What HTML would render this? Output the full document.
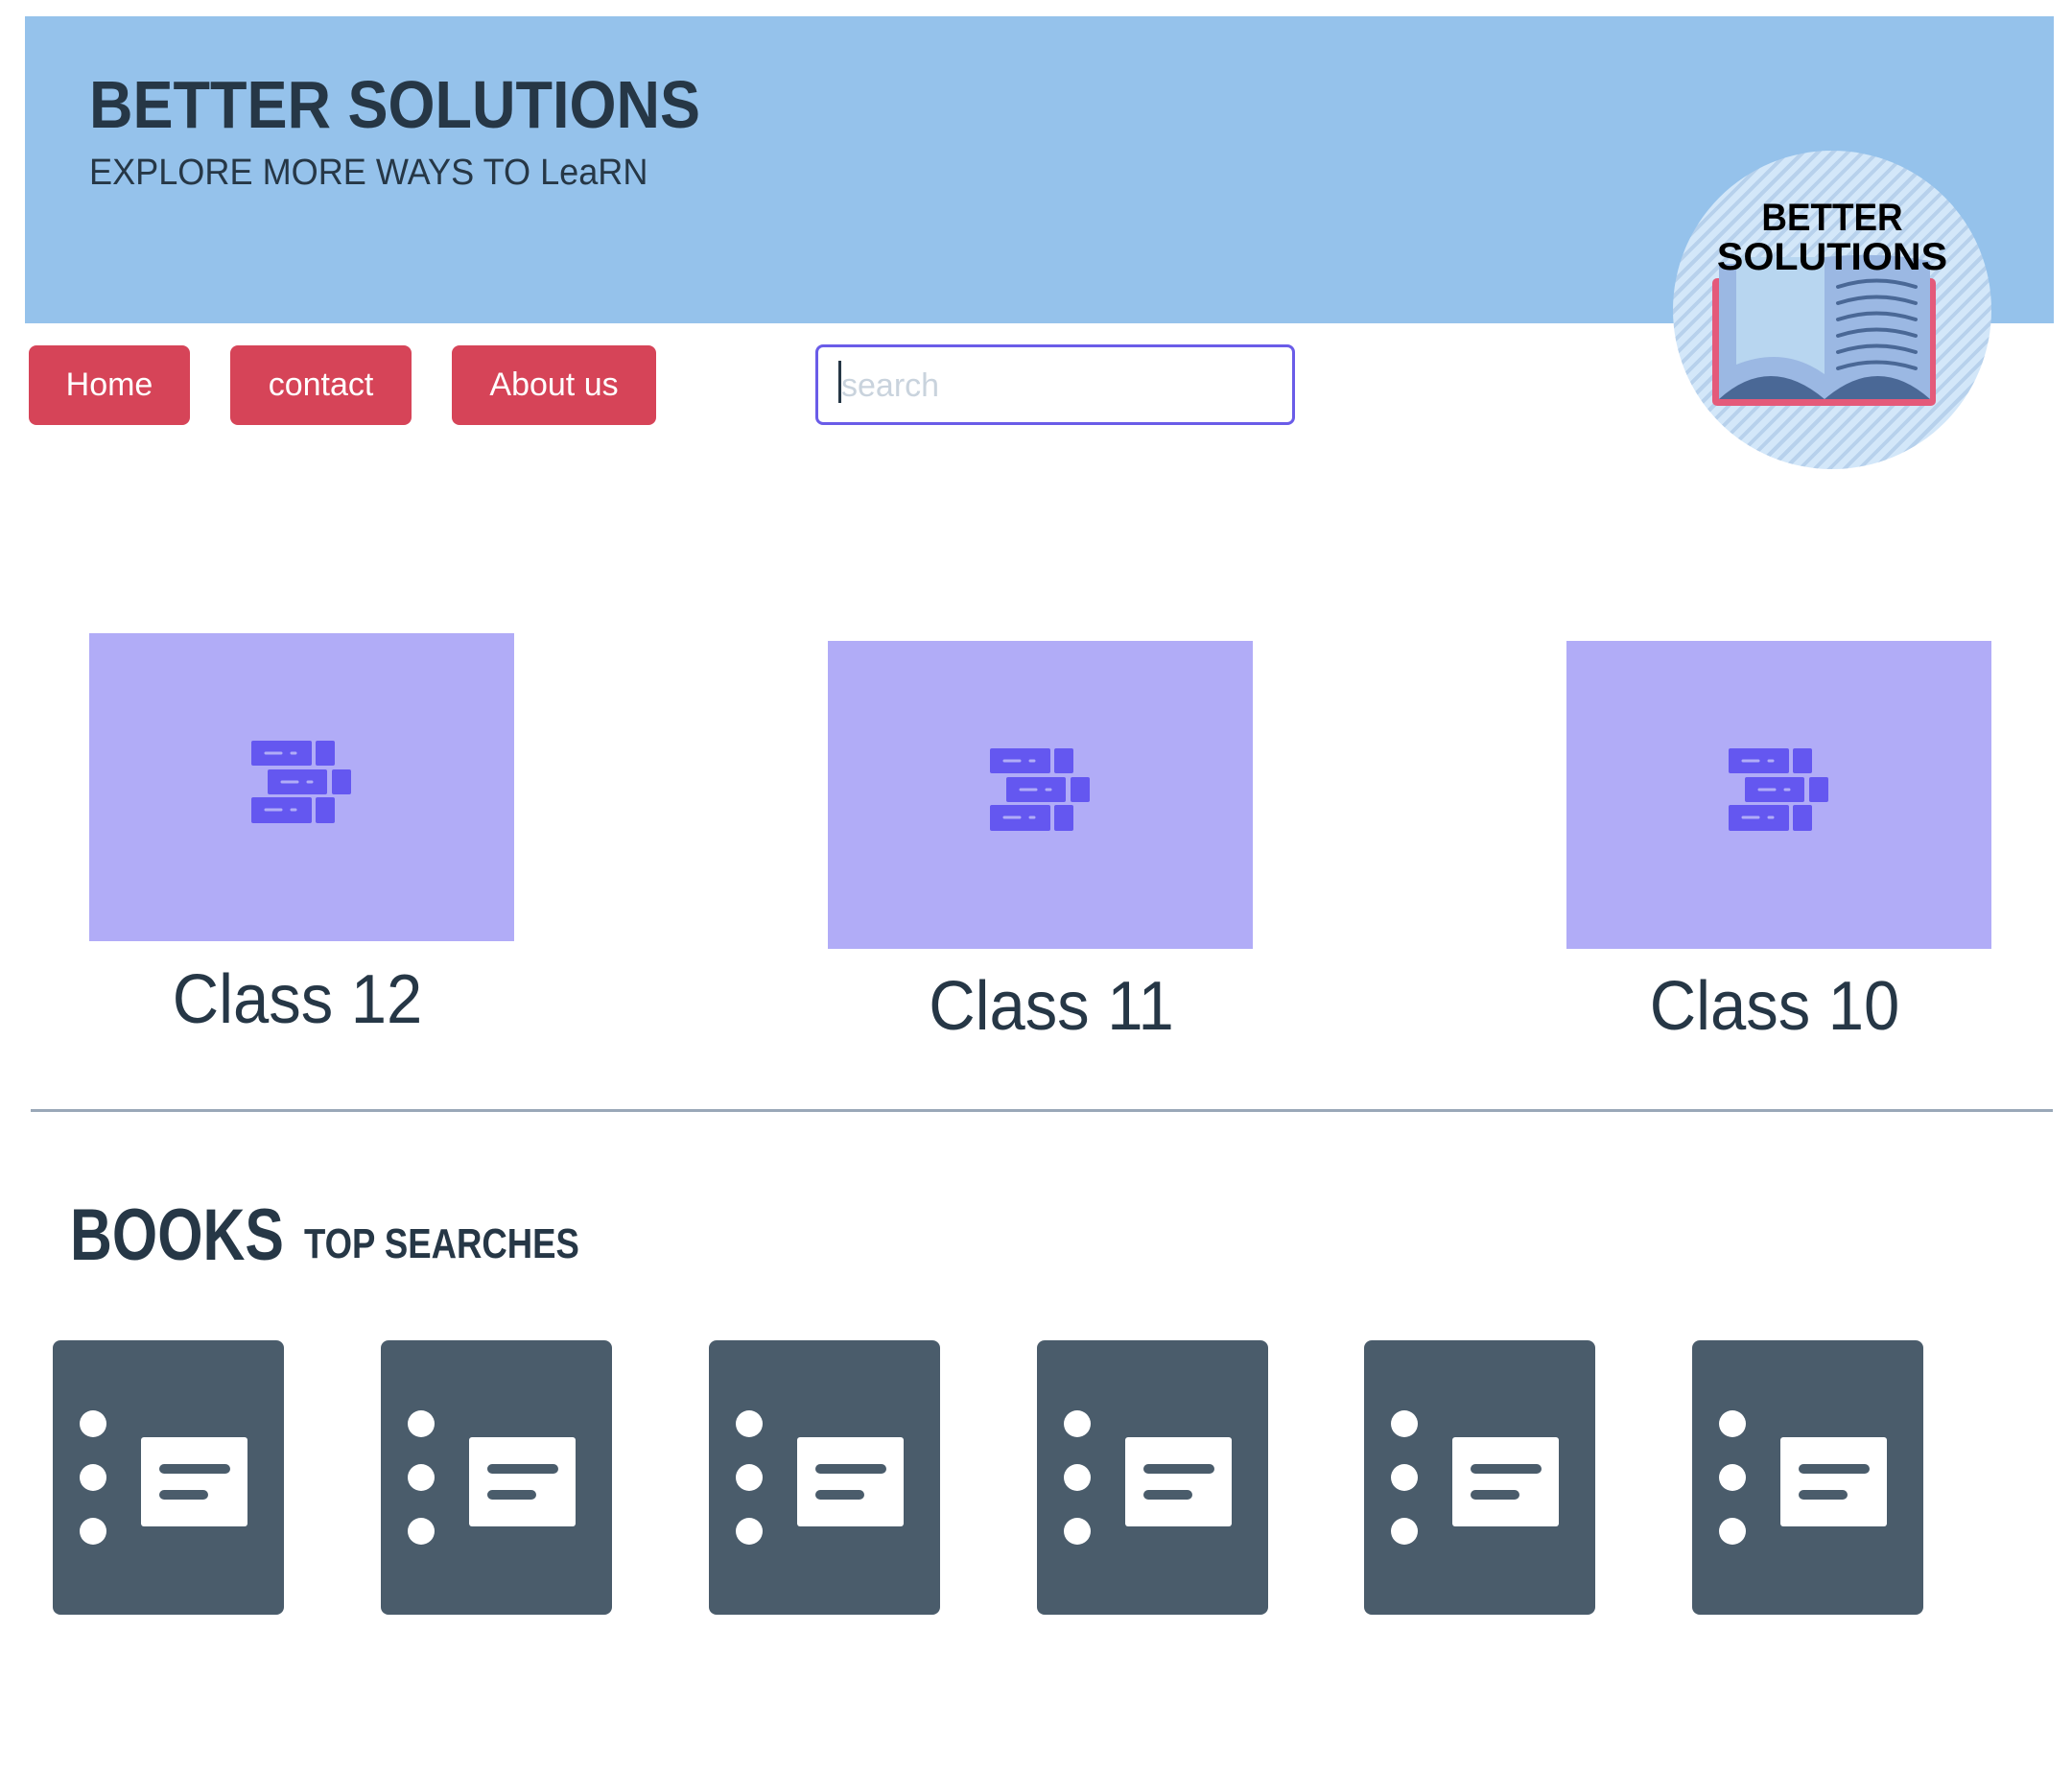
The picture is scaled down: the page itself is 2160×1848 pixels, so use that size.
<!DOCTYPE html>
<html><head><meta charset="utf-8"><style>
*{margin:0;padding:0;box-sizing:border-box}
body{width:2160px;height:1848px;background:#fff;position:relative;overflow:hidden;font-family:"Liberation Sans",sans-serif;color:#263746}
.a{position:absolute;white-space:nowrap;line-height:1}
.btn{position:absolute;top:360px;height:83px;background:#d64458;border-radius:8px;color:#fff;font-size:34px;display:flex;align-items:center;justify-content:center}
.card{position:absolute;width:443px;height:321px;background:#b1acf7}
.card svg{position:absolute;left:169px;top:112px}
.tile{position:absolute;top:1397px;width:241px;height:286px;background:#4a5c6b;border-radius:8px}
.tile svg{position:absolute;left:0;top:0}
</style></head><body>
<div class="a" style="left:26px;top:17px;width:2115px;height:320px;background:#95c2eb"></div>
<div class="a" style="left:93px;top:74px;font-size:70px;font-weight:bold;transform:scaleX(0.9);transform-origin:left">BETTER SOLUTIONS</div>
<div class="a" style="left:93px;top:161px;font-size:38px;transform:scaleX(0.95);transform-origin:left">EXPLORE MORE WAYS TO LeaRN</div>

<div class="btn" style="left:30px;width:168px">Home</div>
<div class="btn" style="left:240px;width:189px">contact</div>
<div class="btn" style="left:471px;width:213px">About us</div>
<div class="a" style="left:850px;top:359px;width:500px;height:84px;border:3px solid #6a5ce8;border-radius:8px"></div>
<div class="a" style="left:874px;top:376px;width:3px;height:44px;background:#263746"></div>
<div class="a" style="left:877px;top:385px;font-size:34px;color:#c9d3dd">search</div>

<div class="a" style="left:1744px;top:157px;width:332px;height:332px;border-radius:50%;background:repeating-linear-gradient(135deg,#d3e7f9 0 7px,#b7d1ec 7px 11px)"></div>
<svg class="a" style="left:1744px;top:157px" width="332" height="332" viewBox="1744 157 332 332">
<rect x="1785" y="290" width="233" height="133" rx="5" fill="#e45a7a"/>
<path d="M1792 275 L1902 275 L1902 416 L1792 416 Z" fill="#9bb8e3"/>
<path d="M1810 268 L1902 268 L1902 390 Q1860 360 1810 380 Z" fill="#b8d6f0"/>
<path d="M1902 268 Q1960 262 2012 272 L2012 416 L1902 416 Z" fill="#9bb8e3"/>
<g stroke="#4a6896" stroke-width="4" fill="none" stroke-linecap="round">
<path d="M1916 299 Q1956 286 1997 299"/><path d="M1916 316 Q1956 303 1997 316"/>
<path d="M1916 333 Q1956 320 1997 333"/><path d="M1916 350 Q1956 337 1997 350"/>
<path d="M1916 367 Q1956 354 1997 367"/><path d="M1916 384 Q1956 371 1997 384"/>
</g>
<path d="M1792 416 Q1845 368 1902 416 Q1958 368 2012 416 Z" fill="#4a6896"/>
<text x="1910" y="240" text-anchor="middle" font-family="Liberation Sans" font-weight="bold" font-size="40" fill="#000" transform="translate(1910 0) scale(0.92 1) translate(-1910 0)">BETTER</text>
<text x="1910" y="281" text-anchor="middle" font-family="Liberation Sans" font-weight="bold" font-size="40" fill="#000" transform="translate(1910 0) scale(1.03 1) translate(-1910 0)">SOLUTIONS</text>
</svg>

<div class="card" style="left:93px;top:660px"><svg width="104" height="86"><g fill="#6457f0"><rect x="0" y="0" width="63" height="26" rx="2"/><rect x="67" y="0" width="20" height="26" rx="2"/><rect x="17" y="30" width="62" height="26" rx="2"/><rect x="84" y="30" width="20" height="26" rx="2"/><rect x="0" y="59" width="63" height="27" rx="2"/><rect x="67" y="59" width="20" height="27" rx="2"/></g><g stroke="#b1acf7" stroke-width="3" stroke-linecap="round"><path d="M15 13H31M42 13H46M32 43H48M59 43H63M15 72H31M42 72H46"/></g></svg></div>
<div class="card" style="left:863px;top:668px"><svg width="104" height="86"><g fill="#6457f0"><rect x="0" y="0" width="63" height="26" rx="2"/><rect x="67" y="0" width="20" height="26" rx="2"/><rect x="17" y="30" width="62" height="26" rx="2"/><rect x="84" y="30" width="20" height="26" rx="2"/><rect x="0" y="59" width="63" height="27" rx="2"/><rect x="67" y="59" width="20" height="27" rx="2"/></g><g stroke="#b1acf7" stroke-width="3" stroke-linecap="round"><path d="M15 13H31M42 13H46M32 43H48M59 43H63M15 72H31M42 72H46"/></g></svg></div>
<div class="card" style="left:1633px;top:668px"><svg width="104" height="86"><g fill="#6457f0"><rect x="0" y="0" width="63" height="26" rx="2"/><rect x="67" y="0" width="20" height="26" rx="2"/><rect x="17" y="30" width="62" height="26" rx="2"/><rect x="84" y="30" width="20" height="26" rx="2"/><rect x="0" y="59" width="63" height="27" rx="2"/><rect x="67" y="59" width="20" height="27" rx="2"/></g><g stroke="#b1acf7" stroke-width="3" stroke-linecap="round"><path d="M15 13H31M42 13H46M32 43H48M59 43H63M15 72H31M42 72H46"/></g></svg></div>

<div class="a" style="left:110px;width:400px;text-align:center;top:1006px;font-size:72px;transform:scaleX(0.93)">Class 12</div>
<div class="a" style="left:896px;width:400px;text-align:center;top:1013px;font-size:72px;transform:scaleX(0.93)">Class 11</div>
<div class="a" style="left:1650px;width:400px;text-align:center;top:1013px;font-size:72px;transform:scaleX(0.93)">Class 10</div>

<div class="a" style="left:32px;top:1156px;width:2108px;height:3px;background:#9aa8b8"></div>

<div class="a" style="left:73px;top:1250px;font-size:76px;font-weight:bold;transform:scaleX(0.8);transform-origin:left">BOOKS</div>
<div class="a" style="left:317px;top:1275px;font-size:44px;font-weight:bold;transform:scaleX(0.83);transform-origin:left">TOP SEARCHES</div>

<div class="tile" style="left:55px"><svg width="241" height="286"><g fill="#fff"><circle cx="42" cy="87" r="14"/><circle cx="42" cy="143" r="14"/><circle cx="42" cy="199" r="14"/><rect x="92" y="101" width="111" height="93" rx="3"/></g><g stroke="#4a5c6b" stroke-width="10" stroke-linecap="round"><path d="M116 134H180M116 161H157"/></g></svg></div>
<div class="tile" style="left:397px"><svg width="241" height="286"><g fill="#fff"><circle cx="42" cy="87" r="14"/><circle cx="42" cy="143" r="14"/><circle cx="42" cy="199" r="14"/><rect x="92" y="101" width="111" height="93" rx="3"/></g><g stroke="#4a5c6b" stroke-width="10" stroke-linecap="round"><path d="M116 134H180M116 161H157"/></g></svg></div>
<div class="tile" style="left:739px"><svg width="241" height="286"><g fill="#fff"><circle cx="42" cy="87" r="14"/><circle cx="42" cy="143" r="14"/><circle cx="42" cy="199" r="14"/><rect x="92" y="101" width="111" height="93" rx="3"/></g><g stroke="#4a5c6b" stroke-width="10" stroke-linecap="round"><path d="M116 134H180M116 161H157"/></g></svg></div>
<div class="tile" style="left:1081px"><svg width="241" height="286"><g fill="#fff"><circle cx="42" cy="87" r="14"/><circle cx="42" cy="143" r="14"/><circle cx="42" cy="199" r="14"/><rect x="92" y="101" width="111" height="93" rx="3"/></g><g stroke="#4a5c6b" stroke-width="10" stroke-linecap="round"><path d="M116 134H180M116 161H157"/></g></svg></div>
<div class="tile" style="left:1422px"><svg width="241" height="286"><g fill="#fff"><circle cx="42" cy="87" r="14"/><circle cx="42" cy="143" r="14"/><circle cx="42" cy="199" r="14"/><rect x="92" y="101" width="111" height="93" rx="3"/></g><g stroke="#4a5c6b" stroke-width="10" stroke-linecap="round"><path d="M116 134H180M116 161H157"/></g></svg></div>
<div class="tile" style="left:1764px"><svg width="241" height="286"><g fill="#fff"><circle cx="42" cy="87" r="14"/><circle cx="42" cy="143" r="14"/><circle cx="42" cy="199" r="14"/><rect x="92" y="101" width="111" height="93" rx="3"/></g><g stroke="#4a5c6b" stroke-width="10" stroke-linecap="round"><path d="M116 134H180M116 161H157"/></g></svg></div>
</body></html>
